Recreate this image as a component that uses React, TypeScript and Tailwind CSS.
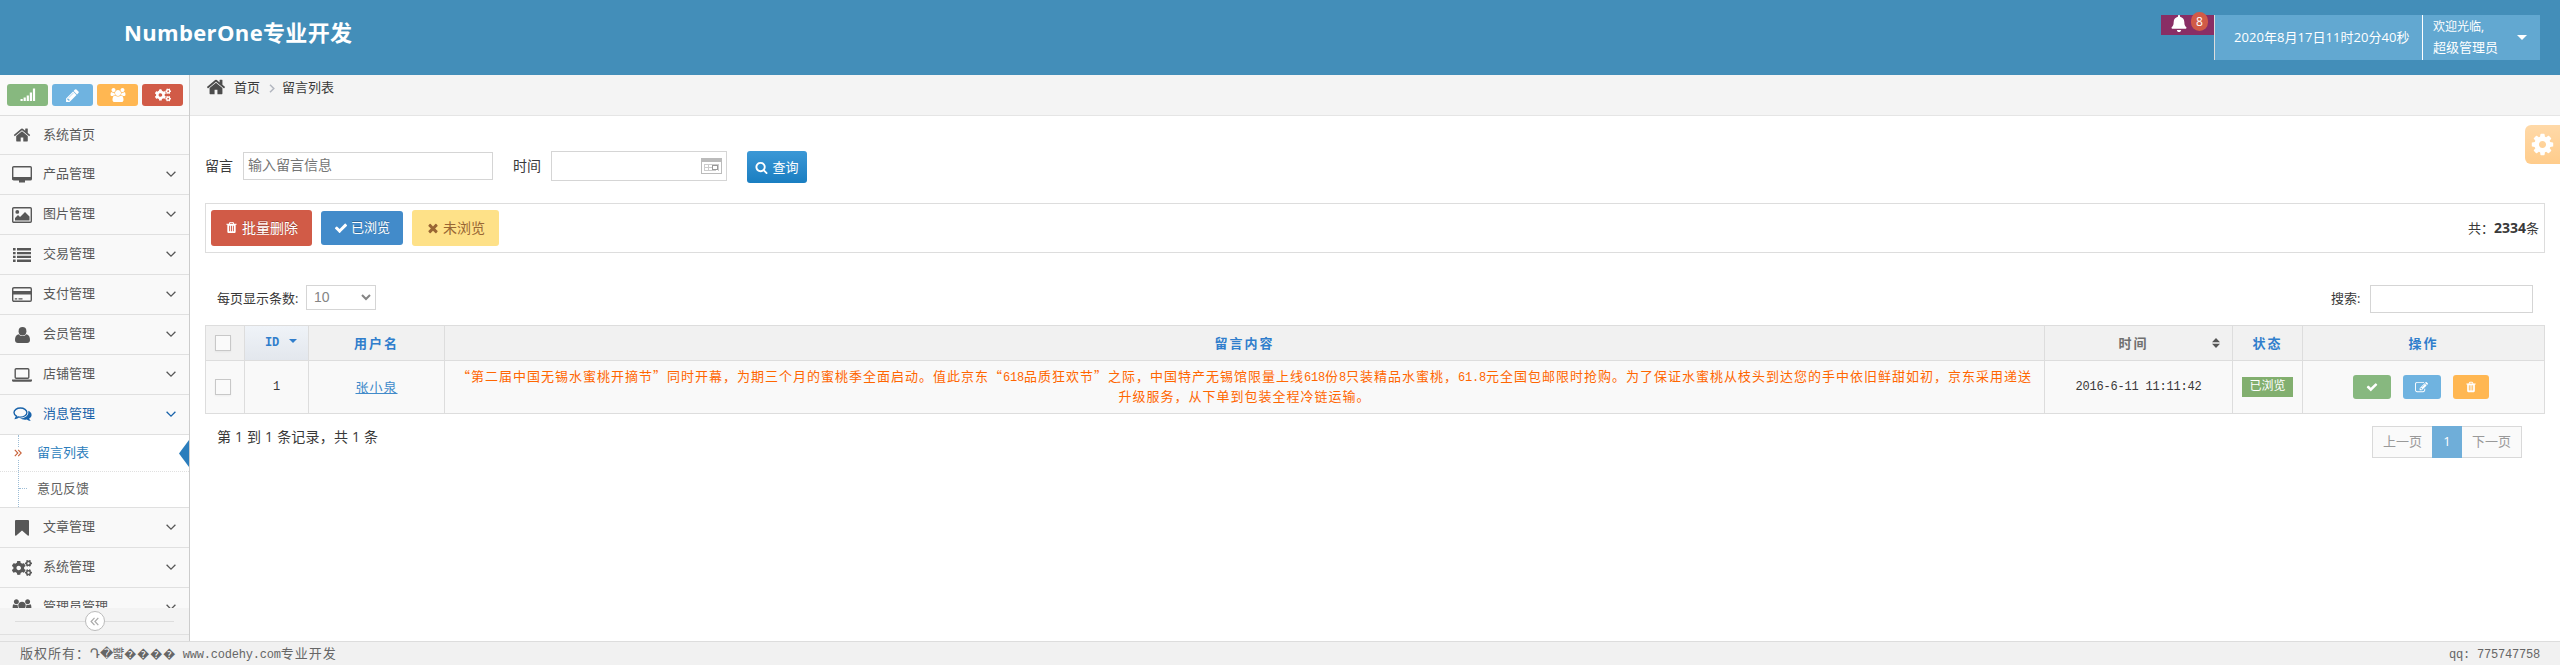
import React from "react";
import { FaBell, FaCogs } from "react-icons/fa";

const PATHS = {
  home: "M1472 992v480q0 26-19 45t-45 19h-384v-384h-256v384h-384q-26 0-45-19t-19-45v-480q0-1 .5-3t.5-3l575-474 575 474q1 2 1 6zm223-69l-62 74q-8 9-21 11h-3q-13 0-21-7l-692-577-692 577q-12 8-24 7-13-2-21-11l-62-74q-8-10-7-23.5t11-21.5l719-599q32-26 76-26t76 26l244 204v-195q0-14 9-23t23-9h192q14 0 23 9t9 23v408l219 182q10 8 11 21.5t-7 23.5z",
  pencil:
    "M491 1536l91-91-235-235-91 91v107h128v128h107zm523-928q0-22-22-22-10 0-17 7l-542 542q-7 7-7 17 0 22 22 22 10 0 17-7l542-542q7-7 7-17zm-54-192l416 416-832 832h-416v-416zm683 96q0 53-37 90l-166 166-416-416 166-165q36-38 90-38 53 0 91 38l235 234q37 39 37 91z",
  check:
    "M1671 566q0 40-28 68l-724 724-136 136q-28 28-68 28t-68-28l-136-136-362-362q-28-28-28-68t28-68l136-136q28-28 68-28t68 28l294 295 656-657q28-28 68-28t68 28l136 136q28 28 28 68z",
  times:
    "M1490 1322q0 40-28 68l-136 136q-28 28-68 28t-68-28l-294-294-294 294q-28 28-68 28t-68-28l-136-136q-28-28-28-68t28-68l294-294-294-294q-28-28-28-68t28-68l136-136q28-28 68-28t68 28l294 294 294-294q28-28 68-28t68 28l136 136q28 28 28 68t-28 68l-294 294 294 294q28 28 28 68z",
  trash:
    "M704 1376v-704q0-14-9-23t-23-9h-64q-14 0-23 9t-9 23v704q0 14 9 23t23 9h64q14 0 23-9t9-23zm256 0v-704q0-14-9-23t-23-9h-64q-14 0-23 9t-9 23v704q0 14 9 23t23 9h64q14 0 23-9t9-23zm256 0v-704q0-14-9-23t-23-9h-64q-14 0-23 9t-9 23v704q0 14 9 23t23 9h64q14 0 23-9t9-23zm-544-992h448l-48-117q-7-9-17-11h-317q-10 2-17 11zm928 32v64q0 14-9 23t-23 9h-96v948q0 83-47 143.5t-113 60.5h-832q-66 0-113-58.5t-47-141.5v-952h-96q-14 0-23-9t-9-23v-64q0-14 9-23t23-9h309l70-167q15-37 54-63t79-26h320q40 0 79 26t54 63l70 167h309q14 0 23 9t9 23z",
  search:
    "M1216 832q0-185-131.5-316.5t-316.5-131.5-316.5 131.5-131.5 316.5 131.5 316.5 316.5 131.5 316.5-131.5 131.5-316.5zm512 832q0 52-38 90t-90 38q-54 0-90-38l-343-342q-179 124-399 124-143 0-273.5-55.5t-225-150-150-225-55.5-273.5 55.5-273.5 150-225 225-150 273.5-55.5 273.5 55.5 225 150 150 225 55.5 273.5q0 220-124 399l343 343q37 37 37 90z",
  cog: "M1152 896q0-106-75-181t-181-75-181 75-75 181 75 181 181 75 181-75 75-181zm512-109v222q0 12-8 23t-20 13l-185 28q-19 54-39 91 35 50 107 138 10 12 10 25t-9 23q-27 37-99 108t-94 71q-12 0-26-9l-138-108q-44 23-91 38-16 136-29 186-7 28-36 28h-222q-14 0-24.5-8.5t-11.5-21.5l-28-184q-49-16-90-37l-141 107q-10 9-25 9-14 0-25-11-126-114-165-168-7-10-7-23 0-12 8-23 15-21 51-66.5t54-70.5q-27-50-41-99l-183-27q-13-2-21-12.5t-8-23.5v-222q0-12 8-23t19-13l186-28q14-46 39-92-40-57-107-138-10-12-10-24 0-10 9-23 26-36 98.5-107.5t94.5-71.5q13 0 26 10l138 107q44-23 91-38 16-136 29-186 7-28 36-28h222q14 0 24.5 8.5t11.5 21.5l28 184q49 16 90 37l142-107q9-9 24-9 13 0 25 10 129 119 165 170 7 8 7 22 0 12-8 23-15 21-51 66.5t-54 70.5q26 50 41 98l183 28q13 2 21 12.5t8 23.5z",
  edit: "M888 1184l116-116-152-152-116 116v56h96v96h56zm440-720q-16-16-33 1l-350 350q-17 17-1 33t33-1l350-350q17-17 1-33zm80 594v190q0 119-84.5 203.5t-203.5 84.5h-832q-119 0-203.5-84.5t-84.5-203.5v-832q0-119 84.5-203.5t203.5-84.5h832q63 0 117 25 15 7 18 23 3 17-9 29l-49 49q-14 14-32 8-23-6-45-6h-832q-66 0-113 47t-47 113v832q0 66 47 113t113 47h832q66 0 113-47t47-113v-126q0-13 9-22l64-64q15-15 35-7t20 29zm-96-738l288 288-672 672h-288v-288zm444 132l-92 92-288-288 92-92q28-28 68-28t68 28l152 152q28 28 28 68t-28 68z",
};

function Glyph({ name, className }: { name: keyof typeof PATHS; className: string }) {
  return (
    <svg viewBox="0 0 1792 1792" className={className} fill="currentColor">
      <path d={PATHS[name]} />
    </svg>
  );
}

function UsersIcon({ className }: { className: string }) {
  return (
    <svg viewBox="0 0 2048 1792" className={className} fill="currentColor">
      <path d="M657 896q-162 5-265 128h-134q-82 0-138-40.5t-56-118.5q0-353 124-353 6 0 43.5 21t97.5 42.5 119 21.5q67 0 133-23-5 37-5 66 0 139 81 256zm1071 637q0 120-73 189.500t-194 69.500h-874q-121 0-194-69.500t-73-189.500q0-53 3.500-103.500t14-109 26.500-108.500 43-97.500 62-81 85.500-53.500 111.500-20q10 0 43 21.500t73 48 107 48 135 21.500 135-21.500 107-48 73-48 43-21.500q61 0 111.500 20t85.500 53.500 62 81 43 97.500 26.500 108.500 14 109 3.500 103.500zm-1024-1277q0 106-75 181t-181 75-181-75-75-181 75-181 181-75 181 75 75 181zm704 384q0 159-112.500 271.500t-271.500 112.500-271.500-112.500-112.500-271.500 112.500-271.500 271.500-112.500 271.500 112.500 112.500 271.500zm576 225q0 78-56 118.500t-138 40.500h-134q-103-123-265-128 81-117 81-256 0-29-5-66 66 23 133 23 59 0 119-21.500t97.500-42.500 43.500-21q124 0 124 353zm-128-609q0 106-75 181t-181 75-181-75-75-181 75-181 181-75 181 75 75 181z" />
    </svg>
  );
}

function SignalIcon() {
  return (
    <svg viewBox="0 0 16 14" className="h-[14px] w-4" fill="currentColor">
      <rect x="0.5" y="11" width="2.2" height="2" />
      <rect x="3.6" y="9.5" width="2.2" height="3.5" />
      <rect x="6.7" y="7.5" width="2.2" height="5.5" />
      <rect x="9.800" y="4.500" width="2.200" height="8.500" />
      <rect x="12.900" y="0.500" width="2.200" height="12.500" />
    </svg>
  );
}

function DesktopIcon() {
  return (
    <svg viewBox="0 0 20 17" className="h-[17px] w-5" fill="none" stroke="currentColor">
      <rect x="0.7" y="0.7" width="18.6" height="13.2" rx="1" strokeWidth="1.4" />
      <path d="M1 11h18v3H1zM7 14h6v2.6H7z" fill="currentColor" stroke="none" />
    </svg>
  );
}

function PictureIcon() {
  return (
    <svg viewBox="0 0 20 16" className="h-4 w-5" fill="currentColor">
      <rect x="0.7" y="0.7" width="18.6" height="14.6" rx="1" fill="none" stroke="currentColor" strokeWidth="1.4" />
      <circle cx="5.300" cy="4.900" r="1.900" />
      <path d="M3 13.500v-2.500l3-3 2 2 5-5 4.500 4.500v4z" />
    </svg>
  );
}

function ListIcon() {
  return (
    <svg viewBox="0 0 18 14" className="h-[14px] w-[18px]" fill="currentColor">
      <path d="M0 0h2.600v2.400H0zM4 0h14v2.400H4zM0 3.900h2.600v2.400H0zM4 3.900h14v2.400H4zM0 7.700h2.600v2.400H0zM4 7.700h14v2.400H4zM0 11.600h2.600V14H0zM4 11.600h14V14H4z" />
    </svg>
  );
}

function CardIcon() {
  return (
    <svg viewBox="0 0 20 15" className="h-[15px] w-5" fill="currentColor">
      <rect x="0.700" y="0.700" width="18.600" height="13.600" rx="1.200" fill="none" stroke="currentColor" strokeWidth="1.400" />
      <path d="M1 4h18v3.400H1zM2.800 11.200h2.400v1.300H2.800zM6.500 11.200h4v1.300h-4z" />
    </svg>
  );
}

function UserIcon() {
  return (
    <svg viewBox="0 0 15 16" className="h-4 w-[15px]" fill="currentColor">
      <ellipse cx="7.500" cy="4.200" rx="3.900" ry="4.200" />
      <path d="M3.600 7.200C1 7.600 0 10 0 13c0 2 1.200 3 2.900 3h9.200c1.700 0 2.900-1 2.900-3 0-3-1-5.400-3.600-5.800-1 1.200-2.400 1.900-3.900 1.900s-2.900-.7-3.900-1.900z" />
    </svg>
  );
}

function LaptopIcon() {
  return (
    <svg viewBox="0 0 20 14" className="h-[14px] w-5" fill="currentColor">
      <rect x="3.200" y="0.700" width="13.600" height="9.600" rx="1" fill="none" stroke="currentColor" strokeWidth="1.400" />
      <path d="M0 11.500h20v1c0 .8-.8 1.300-1.700 1.300H1.700C.8 13.800 0 13.300 0 12.500z" />
    </svg>
  );
}

function CommentsIcon() {
  return (
    <svg viewBox="0 0 19 16" className="h-4 w-[19px]" fill="none" stroke="currentColor">
      <path
        d="M7.400 1C3.800 1 1 3 1 5.600c0 1.500 1 2.800 2.500 3.600L2.600 11.300c1.200-.3 2-.7 2.800-1.400.6.1 1.300.2 2 .2 3.600 0 6.500-2 6.500-4.500S11 1 7.400 1z"
        strokeWidth="1.400"
      />
      <path
        d="M15.300 3.800c2 .9 3.300 2.400 3.300 4.100 0 1.500-.9 2.700-2.400 3.600.2 1 .8 1.600 1.600 2.400-1.800 0-3-.5-4-1.400-2.700.5-5.200-.1-6.800-1.300 4.600.1 8.400-2.300 8.300-5.800 0-.6 0-1.100 0-1.600z"
        fill="currentColor"
        stroke="none"
      />
    </svg>
  );
}

function BookmarkIcon() {
  return (
    <svg viewBox="0 0 14 16" className="h-4 w-[14px]" fill="currentColor">
      <path d="M1 0h12q1 0 1 1v14q0 1-1 .8L7 10.500 1 15.800Q0 16 0 15V1Q0 0 1 0z" />
    </svg>
  );
}

function ChevronDown() {
  return (
    <svg viewBox="0 0 10 7" className="h-[7px] w-[10px]" fill="none" stroke="currentColor" strokeWidth="1.300">
      <path d="M0.600 0.800L5 5.200l4.400-4.400" />
    </svg>
  );
}

function DoubleAngle({ flip, className }: { flip?: boolean; className: string }) {
  return (
    <svg viewBox="0 0 8 8" className={className} fill="none" stroke="currentColor" strokeWidth="1.100">
      {flip ? <path d="M4 .8L1 4l3 3.200M7.400.8l-3 3.200 3 3.200" /> : <path d="M.8.8L3.800 4l-3 3.200M4.200.8l3 3.200-3 3.200" />}
    </svg>
  );
}

function CalendarIcon() {
  return (
    <svg viewBox="0 0 21 16" className="h-4 w-[21px]" fill="none" stroke="#bbb">
      <rect x="0.500" y="0.500" width="20" height="15" />
      <path d="M0 0h21v4H0z" fill="#bbb" stroke="none" />
      <path d="M3 6.500h15M3 9.500h15M3 12.500h12M3.500 6v7M7.500 6v7M11.500 6v7M17.500 6v7" stroke="#ccc" />
      <rect x="11.500" y="7.500" width="5" height="4" fill="#fff" stroke="#999" />
    </svg>
  );
}

/* Sets half-width runs in a fixed-pitch face, one half of a full-width cell per character. */
function Mono({ text }: { text: string }) {
  return (
    <>
      {text.split(/([\x20-\x7e]+)/).map((part, i) =>
        /^[\x20-\x7e]+$/.test(part) ? (
          <span key={i} className="font-['Liberation_Mono',monospace] text-[12px] tracking-[-0.2px]">
            {part}
          </span>
        ) : (
          part
        ),
      )}
    </>
  );
}

const SONG = "font-['Noto_Sans_CJK_SC',sans-serif] text-[13px] tracking-[1px]";

type Item = { label: string; icon: React.ReactNode; plain?: boolean; active?: boolean };

const TOP_ITEMS: Item[] = [
  { label: "系统首页", icon: <Glyph name="home" className="size-[18px]" />, plain: true },
  { label: "产品管理", icon: <DesktopIcon /> },
  { label: "图片管理", icon: <PictureIcon /> },
  { label: "交易管理", icon: <ListIcon /> },
  { label: "支付管理", icon: <CardIcon /> },
  { label: "会员管理", icon: <UserIcon /> },
  { label: "店铺管理", icon: <LaptopIcon /> },
  { label: "消息管理", icon: <CommentsIcon />, active: true },
];

const BOTTOM_ITEMS: Item[] = [
  { label: "文章管理", icon: <BookmarkIcon /> },
  { label: "系统管理", icon: <FaCogs className="size-5" /> },
  { label: "管理员管理", icon: <UsersIcon className="h-[18px] w-5" /> },
];

function NavItem({ item }: { item: Item }) {
  return (
    <div
      className={`flex shrink-0 items-center border-b border-[#e0e0e0] bg-[#f9f9f9] ${item.plain ? "h-[39px]" : "h-10"} ${
        item.active ? "text-[#1963aa]" : "text-[#585858]"
      }`}
    >
      <span className="flex w-[43px] justify-center pl-px">{item.icon}</span>
      <span className="flex-1 pb-px text-[13px]">{item.label}</span>
      {!item.plain && (
        <span className="pr-[13px] pb-px">
          <ChevronDown />
        </span>
      )}
    </div>
  );
}

function Sidebar() {
  const shortcut = "flex h-[22px] w-[41px] items-center justify-center rounded-[3px]";
  return (
    <aside className="flex w-[190px] shrink-0 flex-col border-r border-[#ccc] bg-[#f2f2f2]">
      <div className="flex h-[533px] flex-col overflow-hidden">
        <div className="flex h-[41px] shrink-0 items-center gap-[4px] border-b border-[#ddd] bg-[#fafafa] pl-[7px] text-white">
          <span className={`${shortcut} bg-[#87b87f]`}>
            <SignalIcon />
          </span>
          <span className={`${shortcut} bg-[#6fb3e0]`}>
            <Glyph name="pencil" className="size-[15px]" />
          </span>
          <span className={`${shortcut} bg-[#ffb752]`}>
            <UsersIcon className="h-[14px] w-4" />
          </span>
          <span className={`${shortcut} bg-[#d15b47]`}>
            <FaCogs className="size-4" />
          </span>
        </div>
        {TOP_ITEMS.map((item) => (
          <NavItem key={item.label} item={item} />
        ))}
        <div className="relative h-[73px] shrink-0 border-b border-[#e0e0e0] bg-white text-[13px]">
          <span className="absolute top-0 left-[18px] h-[72px] border-l border-dotted border-[#9dbdd6]" />
          <span className="absolute top-[53px] left-[19px] w-2 border-t border-dotted border-[#9dbdd6]" />
          <span className="absolute top-[12px] left-[14px] bg-white py-[2px] text-[#c86139]">
            <DoubleAngle className="size-2" />
          </span>
          <div className="flex h-[37px] items-center border-b border-dotted border-[#e0e0e0] pl-[37px] text-[#2b7dbc]">
            留言列表
          </div>
          <div className="flex h-[35px] items-center pb-px pl-[37px] text-[#616161]">意见反馈</div>
          <svg viewBox="0 0 10 27" className="absolute top-[5px] right-0 h-[27px] w-[10px]" fill="#2b7dbc">
            <path d="M10 0v27L0 13.500z" />
          </svg>
        </div>
        {BOTTOM_ITEMS.map((item) => (
          <NavItem key={item.label} item={item} />
        ))}
      </div>
      <div className="flex h-[27px] items-center border-b border-[#e0e0e0] bg-[#f3f3f3] px-[15px]">
        <span className="h-px flex-1 bg-[#ddd]" />
        <span className="flex size-5 items-center justify-center rounded-full border border-[#bbb] bg-white text-[#aaa]">
          <DoubleAngle flip className="size-[9px]" />
        </span>
        <span className="h-px flex-1 bg-[#ddd]" />
      </div>
    </aside>
  );
}

function Header() {
  return (
    <header className="flex h-[75px] shrink-0 items-start justify-between bg-[#438eb9] pr-5 text-white">
      <h1 className="pt-[16px] pl-[124px] font-['Open_Sans','Noto_Sans_CJK_SC',sans-serif] text-[22px] leading-[32px] font-bold tracking-[0.35px]">
        NumberOne专业开发
      </h1>
      <div className="flex pt-[15px]">
        <div className="relative h-5 w-[53px] bg-[#892e65]">
          <FaBell className="absolute top-0 left-[10px] h-[17px] w-4" />
          <span className="absolute top-[-3px] left-[30px] flex h-[19px] w-[17px] items-center justify-center rounded-full bg-[#d15b47] text-[12px]">
            8
          </span>
        </div>
        <div className="flex h-[45px] w-[208px] items-center border-l border-[#ddd] bg-[#62a8d1] pt-px pl-[19px] text-[13px] tracking-[0.05px] whitespace-nowrap">
          2020年8月17日11时20分40秒
        </div>
        <div className="flex h-[45px] w-[118px] items-center justify-between border-l border-white bg-[#62a8d1] pr-[13px] pl-[10px]">
          <div className="pb-px text-[13px] leading-[21px]">
            <div className="text-[12px]">欢迎光临,</div>
            <div>超级管理员</div>
          </div>
          <span className="border-x-[5px] border-t-[5px] border-x-transparent border-t-white" />
        </div>
      </div>
    </header>
  );
}

const LINE_1 =
  "“第二届中国无锡水蜜桃开摘节”同时开幕，为期三个月的蜜桃季全面启动。值此京东“618品质狂欢节”之际，中国特产无锡馆限量上线618份8只装精品水蜜桃，61.8元全国包邮限时抢购。为了保证水蜜桃从枝头到达您的手中依旧鲜甜如初，京东采用递送";
const LINE_2 = "升级服务，从下单到包装全程冷链运输。";

function CheckBox() {
  return <span className="block size-4 border border-[#c8c8c8] bg-[#fafafa] shadow-[0_1px_2px_rgba(0,0,0,0.05)]" />;
}

function Table() {
  const cell = "flex items-center justify-center border-r border-[#ddd]";
  const grid = "grid grid-cols-[39px_64px_136px_1600px_188px_70px_242px]";
  return (
    <div className={`border-t border-l border-[#ddd] ${SONG}`}>
      <div className={`${grid} h-[35px] border-b border-[#ddd] bg-[#f1f1f1] font-bold text-[#307ecc]`}>
        <div className={`${cell} pr-[4px]`}>
          <CheckBox />
        </div>
        <div className={`${cell} gap-[10px] bg-gradient-to-b from-[#eff3f8] to-[#e3e7ed] pl-[9px]`}>
          <Mono text="ID" />
          <span className="mb-[5px] border-x-[4px] border-t-[4px] border-x-transparent border-t-[#307ecc]" />
        </div>
        <div className={`${cell} tracking-[2px]`}>用户名</div>
        <div className={`${cell} tracking-[2px]`}>留言内容</div>
        <div className={`${cell} relative pr-[10px] tracking-[2px] text-[#707070]`}>
          时间
          <svg viewBox="0 0 8 10" className="absolute top-[12px] right-[12px] h-[10px] w-2" fill="#555">
            <path d="M4 0l4 4.300H0zM4 10l4-4.300H0z" />
          </svg>
        </div>
        <div className={`${cell} tracking-[2px]`}>状态</div>
        <div className={`${cell} tracking-[2px]`}>操作</div>
      </div>
      <div className={`${grid} h-[53px] border-b border-[#ddd] bg-[#f9f9f9] text-[#393939]`}>
        <div className={`${cell} pr-[4px]`}>
          <CheckBox />
        </div>
        <div className={cell}>
          <Mono text="1" />
        </div>
        <div className={cell}>
          <a className="text-[#428bca] underline">张小泉</a>
        </div>
        <div className={`${cell} flex-col pb-[2px] leading-[18px] whitespace-nowrap text-[#ff6600]`}>
          <div>
            <Mono text={LINE_1} />
          </div>
          <div>
            <Mono text={LINE_2} />
          </div>
        </div>
        <div className={cell}>
          <Mono text="2016-6-11 11:11:42" />
        </div>
        <div className={cell}>
          <span className="flex h-5 w-[51px] justify-center bg-[#82af6f] text-[12px] leading-[16px] tracking-normal text-white">
            已浏览
          </span>
        </div>
        <div className={`${cell} gap-3 pr-[6px] text-white`}>
          <span className="flex h-6 w-[38px] items-center justify-center rounded-[3px] bg-[#87b87f]">
            <Glyph name="check" className="size-3" />
          </span>
          <span className="flex h-6 w-[38px] items-center justify-center rounded-[3px] bg-[#6fb3e0]">
            <Glyph name="edit" className="size-[13px]" />
          </span>
          <span className="flex h-6 w-[36px] items-center justify-center rounded-[3px] bg-[#ffb752]">
            <Glyph name="trash" className="size-3" />
          </span>
        </div>
      </div>
    </div>
  );
}

function Main() {
  return (
    <main className="relative flex min-w-0 flex-1 flex-col bg-white text-[#393939]">
      <nav className="flex h-[41px] items-start border-b border-[#e5e5e5] bg-[#f4f4f4] pl-4 text-[13px] leading-[24px]">
        <Glyph name="home" className="mt-[2px] size-5 text-[#4c4c4c]" />
        <span className="pl-[8px]">首页</span>
        <svg viewBox="0 0 6 9" className="mr-[7px] ml-[9px] mt-[9px] h-[9px] w-[6px]" fill="none" stroke="#b2b6bf" strokeWidth="1.500">
          <path d="M1 .7L4.800 4.500 1 8.300" />
        </svg>
        <span>留言列表</span>
      </nav>
      <div className="flex flex-col pr-[15px] pl-[15px]">
        <div className="mt-[35px] flex h-[32px] text-[14px]">
          <span className="w-[38px] leading-[29px]">留言</span>
          <input
            className="mt-px h-7 w-[250px] border border-[#d5d5d5] px-1 pb-[3px] text-[14px] outline-none placeholder:text-[#757575]"
            placeholder="输入留言信息"
          />
          <span className="ml-5 w-[38px] leading-[29px]">时间</span>
          <span className="flex h-[30px] w-[176px] items-center justify-end border border-[#d5d5d5] pr-[4px]">
            <CalendarIcon />
          </span>
          <button className="ml-5 flex h-8 w-[60px] items-center justify-center gap-[4px] rounded-[3px] bg-gradient-to-b from-[#3b98d6] to-[#197ec1] pt-px text-[13px] text-white">
            <Glyph name="search" className="size-[13px]" />
            查询
          </button>
        </div>
        <div className="mt-5 flex h-[50px] items-center justify-between border border-[#ddd] pr-[5px] pl-[5px]">
          <div className="flex items-center gap-[9px] text-[14px] text-white">
            <button className="flex h-9 w-[101px] items-center justify-center gap-[4px] rounded-[3px] bg-[#d15b47] pb-px [text-shadow:0_-1px_0_rgba(0,0,0,0.25)]">
              <Glyph name="trash" className="size-[13px]" />
              批量删除
            </button>
            <button className="flex h-[34px] w-[82px] items-center justify-center gap-[3px] rounded-[3px] bg-[#428bca] pb-px text-[13px] [text-shadow:0_-1px_0_rgba(0,0,0,0.25)]">
              <Glyph name="check" className="size-[14px]" />
              已浏览
            </button>
            <button className="flex h-9 w-[87px] items-center justify-center gap-[3px] rounded-[3px] bg-[#fee188] pb-px text-[#963]">
              <Glyph name="times" className="size-[14px]" />
              未浏览
            </button>
          </div>
          <span className="pb-px text-[13px]">
            共：<b className="font-['Open_Sans',sans-serif] text-[14px]">2334</b>条
          </span>
        </div>
        <div className="mt-8 flex h-10 items-start justify-between pr-3 pl-3 text-[13px]">
          <div className="flex">
            <span className="w-[89px] leading-[26px]">每页显示条数:</span>
            <span className="flex h-[25px] w-[70px] items-center justify-between border border-[#d5d5d5] pr-[4px] pl-[7px] font-['Liberation_Sans',sans-serif] text-[14px] text-[#858585]">
              10
              <svg viewBox="0 0 10 7" className="h-[7px] w-[10px]" fill="none" stroke="currentColor" strokeWidth="2">
                <path d="M1 1l4 4 4-4" />
              </svg>
            </span>
          </div>
          <div className="flex">
            <span className="w-[39px] leading-[27px]">搜索:</span>
            <input className="h-7 w-[163px] border border-[#d5d5d5] outline-none" />
          </div>
        </div>
        <Table />
        <div className="mt-3 flex items-start justify-between pr-[23px] pl-3">
          <span className="text-[14px] leading-[21px] tracking-[0.2px]">第 1 到 1 条记录，共 1 条</span>
          <div className="flex h-8 w-[150px] text-[13px] text-[#999]">
            <span className="flex w-[60px] items-center justify-center border border-r-0 border-[#d9d9d9] bg-[#fafafa]">上一页</span>
            <span className="flex w-[30px] items-center justify-center bg-[#6faed9] text-white">1</span>
            <span className="flex w-[60px] items-center justify-center border border-l-0 border-[#d9d9d9] bg-[#fafafa]">下一页</span>
          </div>
        </div>
      </div>
      <div className="absolute top-[50px] right-0 flex h-[39px] w-[35px] items-center justify-center rounded-l-md bg-gradient-to-b from-[#ffd9a8] to-[#ffcc8b] text-white">
        <Glyph name="cog" className="size-[25px]" />
      </div>
    </main>
  );
}

export default function App() {
  return (
    <div
      lang="zh-CN"
      className="flex h-[665px] w-[2560px] flex-col overflow-hidden bg-white font-['Open_Sans','Noto_Sans_CJK_SC',sans-serif]"
    >
      <Header />
      <div className="flex h-[566px] shrink-0">
        <Sidebar />
        <Main />
      </div>
      <footer
        className={`flex h-6 shrink-0 items-center justify-between border-t border-[#ddd] bg-[#f1f1f1] pr-5 pl-5 text-[#666] ${SONG}`}
      >
        <span>
          版权所有：<span className="text-[12.500px] tracking-[-0.100px]">Դ�뺣����</span>
          <Mono text=" www.codehy.com专业开发" />
        </span>
        <span>
          <Mono text="qq: 775747758" />
        </span>
      </footer>
    </div>
  );
}
